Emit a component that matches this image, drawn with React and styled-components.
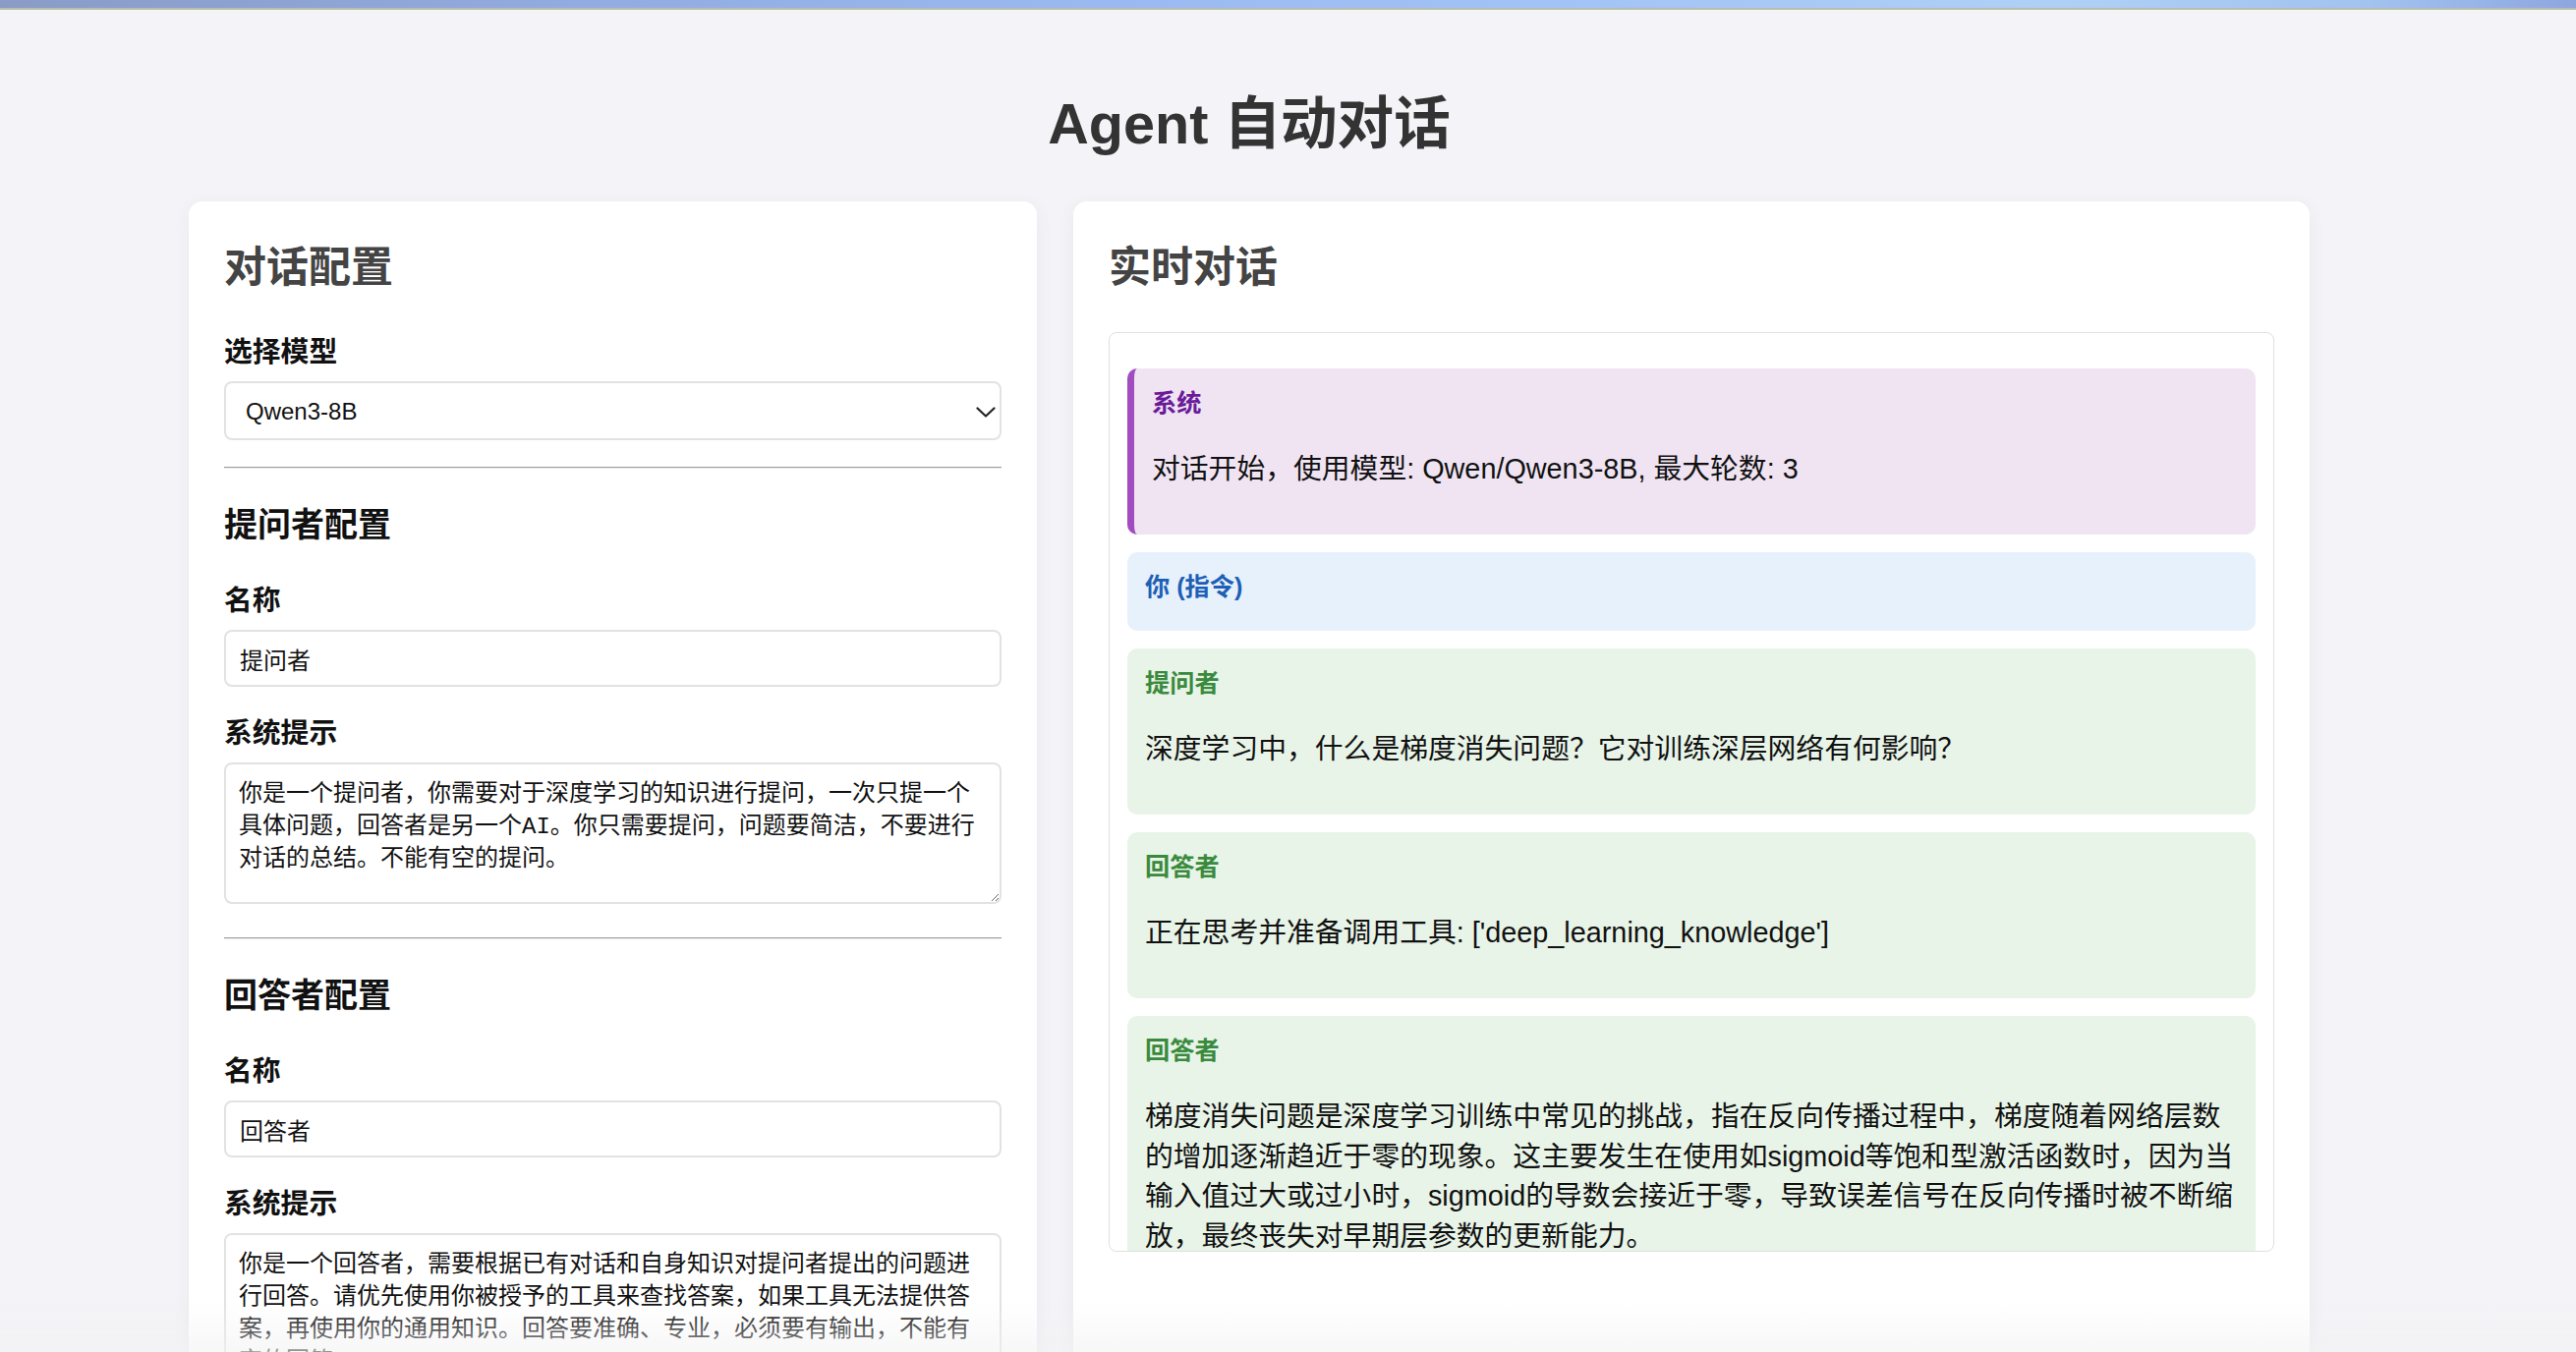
import React from 'react';
import styled, { createGlobalStyle } from 'styled-components';

const GlobalStyle = createGlobalStyle`
  html, body {
    margin: 0;
    padding: 0;
    overflow: hidden;
  }
  body {
    background: #f4f4f8;
    font-family: "Liberation Sans", "Noto Sans CJK SC", sans-serif;
    color: #222;
  }
  * { box-sizing: border-box; }
`;

const TopBar = styled.div`
  height: 10px;
  background: linear-gradient(90deg, #8a9bc7 0%, #92abe0 22%, #9bbaf3 45%, #a3c4f6 62%, #afd0f6 80%, #a2c2f0 92%, #8ea6e0 100%);
  border-bottom: 2px solid #b6c0a7;
`;

const Page = styled.div`
  width: 2542px;
`;

const Title = styled.h1`
  margin: 81px 0 44px;
  text-align: center;
  font-size: 57.6px;
  line-height: 70px;
  font-weight: 700;
  color: #333;
`;

const Layout = styled.div`
  display: grid;
  grid-template-columns: 863px 1258px;
  gap: 37px;
  width: 2158px;
  margin: 0 auto;
`;

const Card = styled.section`
  background: #fff;
  border-radius: 14px;
  padding: 36px;
  box-shadow: 0 4px 18px rgba(30, 30, 60, 0.06);
  min-height: 1400px;
`;

const CardTitle = styled.h2`
  margin: 5px 0 ${p => p.$after}px;
  font-size: 43px;
  line-height: 52px;
  font-weight: 700;
  color: #444;
`;

const SectionTitle = styled.h3`
  margin: 0 0 40px;
  font-size: 34px;
  line-height: 40px;
  font-weight: 700;
  color: #111;
`;

const Field = styled.div`
  margin-bottom: ${p => p.$after}px;
`;

const Label = styled.label`
  display: block;
  margin-bottom: 12px;
  font-size: 28.8px;
  line-height: 35px;
  font-weight: 700;
  color: #111;
`;

const SelectWrap = styled.div`
  position: relative;
`;

const Select = styled.select`
  appearance: none;
  display: block;
  width: 100%;
  height: 60px;
  padding: 0 50px 0 20px;
  border: 2px solid #e2e2e2;
  border-radius: 8px;
  background: #fff;
  font-family: "Liberation Sans", "Noto Sans CJK SC", sans-serif;
  font-size: 24px;
  color: #111;
  outline: none;
`;

const Chevron = styled.svg`
  position: absolute;
  right: 6px;
  top: 26px;
  pointer-events: none;
`;

const Input = styled.input`
  display: block;
  width: 100%;
  height: 58px;
  padding: 0 14px;
  border: 2px solid #e2e2e2;
  border-radius: 8px;
  font-family: "Liberation Sans", "Noto Sans CJK SC", sans-serif;
  font-size: 24px;
  color: #111;
  outline: none;
`;

const TextArea = styled.textarea`
  display: block;
  width: 100%;
  height: 144px;
  padding: 14px 13px;
  border: 2px solid #e2e2e2;
  border-radius: 8px;
  font-family: "Liberation Mono", "Noto Sans CJK SC", monospace;
  font-size: 24px;
  line-height: 33px;
  color: #111;
  resize: vertical;
  outline: none;
`;

const Divider = styled.hr`
  margin: 0 0 37px;
  height: 0;
  border: 0;
  border-top: 1px solid #9c9c9c;
  border-bottom: 1px solid #ececec;
`;

const ChatBox = styled.div`
  height: 936px;
  padding: 0 18px 18px;
  border: 1px solid #e0e0e0;
  border-radius: 8px;
  overflow: hidden;
`;

const roles = {
  system: { bg: '#f0e4f3', fg: '#6a1b9a', edge: '#a24dbf' },
  user: { bg: '#e7f1fc', fg: '#1e5fb6', edge: null },
  agent: { bg: '#e8f4e8', fg: '#3a8a3d', edge: null },
};

const Message = styled.div`
  margin: 36px 0 18px;
  padding: 18px;
  border-radius: 10px;
  background: ${p => roles[p.$role].bg};
  border-left: ${p => (roles[p.$role].edge ? `7px solid ${roles[p.$role].edge}` : 'none')};
  & + & { margin-top: 0; }
`;

const Author = styled.div`
  margin-bottom: 9px;
  font-size: 25.2px;
  line-height: 35px;
  font-weight: 700;
  color: ${p => roles[p.$role].fg};
`;

const Body = styled.p`
  margin: 28.8px 0;
  font-size: 28.8px;
  line-height: 40.5px;
  color: #111;
`;

const Fade = styled.div`
  position: fixed;
  left: 0;
  right: 0;
  bottom: 0;
  height: 50px;
  background: linear-gradient(rgba(242, 242, 244, 0), rgba(242, 242, 244, 0.6));
  pointer-events: none;
`;

const messages = [
  { role: 'system', author: '系统', text: '对话开始，使用模型: Qwen/Qwen3-8B, 最大轮数: 3' },
  { role: 'user', author: '你 (指令)', text: '' },
  { role: 'agent', author: '提问者', text: '深度学习中，什么是梯度消失问题？它对训练深层网络有何影响？' },
  { role: 'agent', author: '回答者', text: "正在思考并准备调用工具: ['deep_learning_knowledge']" },
  {
    role: 'agent',
    author: '回答者',
    text: '梯度消失问题是深度学习训练中常见的挑战，指在反向传播过程中，梯度随着网络层数的增加逐渐趋近于零的现象。这主要发生在使用如sigmoid等饱和型激活函数时，因为当输入值过大或过小时，sigmoid的导数会接近于零，导致误差信号在反向传播时被不断缩放，最终丧失对早期层参数的更新能力。',
  },
];

function AgentConfig({ title, name, prompt }) {
  return (
    <>
      <SectionTitle>{title}</SectionTitle>
      <Field $after={30}>
        <Label>名称</Label>
        <Input defaultValue={name} />
      </Field>
      <Field $after={34}>
        <Label>系统提示</Label>
        <TextArea defaultValue={prompt} />
      </Field>
    </>
  );
}

function App() {
  return (
    <>
      <GlobalStyle />
      <TopBar />
      <Page>
        <Title>Agent 自动对话</Title>
        <Layout>
          <Card>
            <CardTitle $after={43}>对话配置</CardTitle>
            <Field $after={27}>
              <Label>选择模型</Label>
              <SelectWrap>
                <Select defaultValue="qwen3-8b">
                  <option value="qwen3-8b">Qwen3-8B</option>
                </Select>
                <Chevron width="20" height="11" viewBox="0 0 20 11">
                  <path d="M1.5 1.5 L10 9.5 L18.5 1.5" fill="none" stroke="#222" strokeWidth="2.2" strokeLinecap="round" strokeLinejoin="round" />
                </Chevron>
              </SelectWrap>
            </Field>
            <Divider />
            <AgentConfig
              title="提问者配置"
              name="提问者"
              prompt="你是一个提问者，你需要对于深度学习的知识进行提问，一次只提一个具体问题，回答者是另一个AI。你只需要提问，问题要简洁，不要进行对话的总结。不能有空的提问。"
            />
            <Divider />
            <AgentConfig
              title="回答者配置"
              name="回答者"
              prompt="你是一个回答者，需要根据已有对话和自身知识对提问者提出的问题进行回答。请优先使用你被授予的工具来查找答案，如果工具无法提供答案，再使用你的通用知识。回答要准确、专业，必须要有输出，不能有空的回答。"
            />
          </Card>
          <Card>
            <CardTitle $after={40}>实时对话</CardTitle>
            <ChatBox>
              {messages.map((m, i) => (
                <Message key={i} $role={m.role}>
                  <Author $role={m.role}>{m.author}</Author>
                  {m.text && <Body>{m.text}</Body>}
                </Message>
              ))}
            </ChatBox>
          </Card>
        </Layout>
      </Page>
      <Fade />
    </>
  );
}

export default App;
